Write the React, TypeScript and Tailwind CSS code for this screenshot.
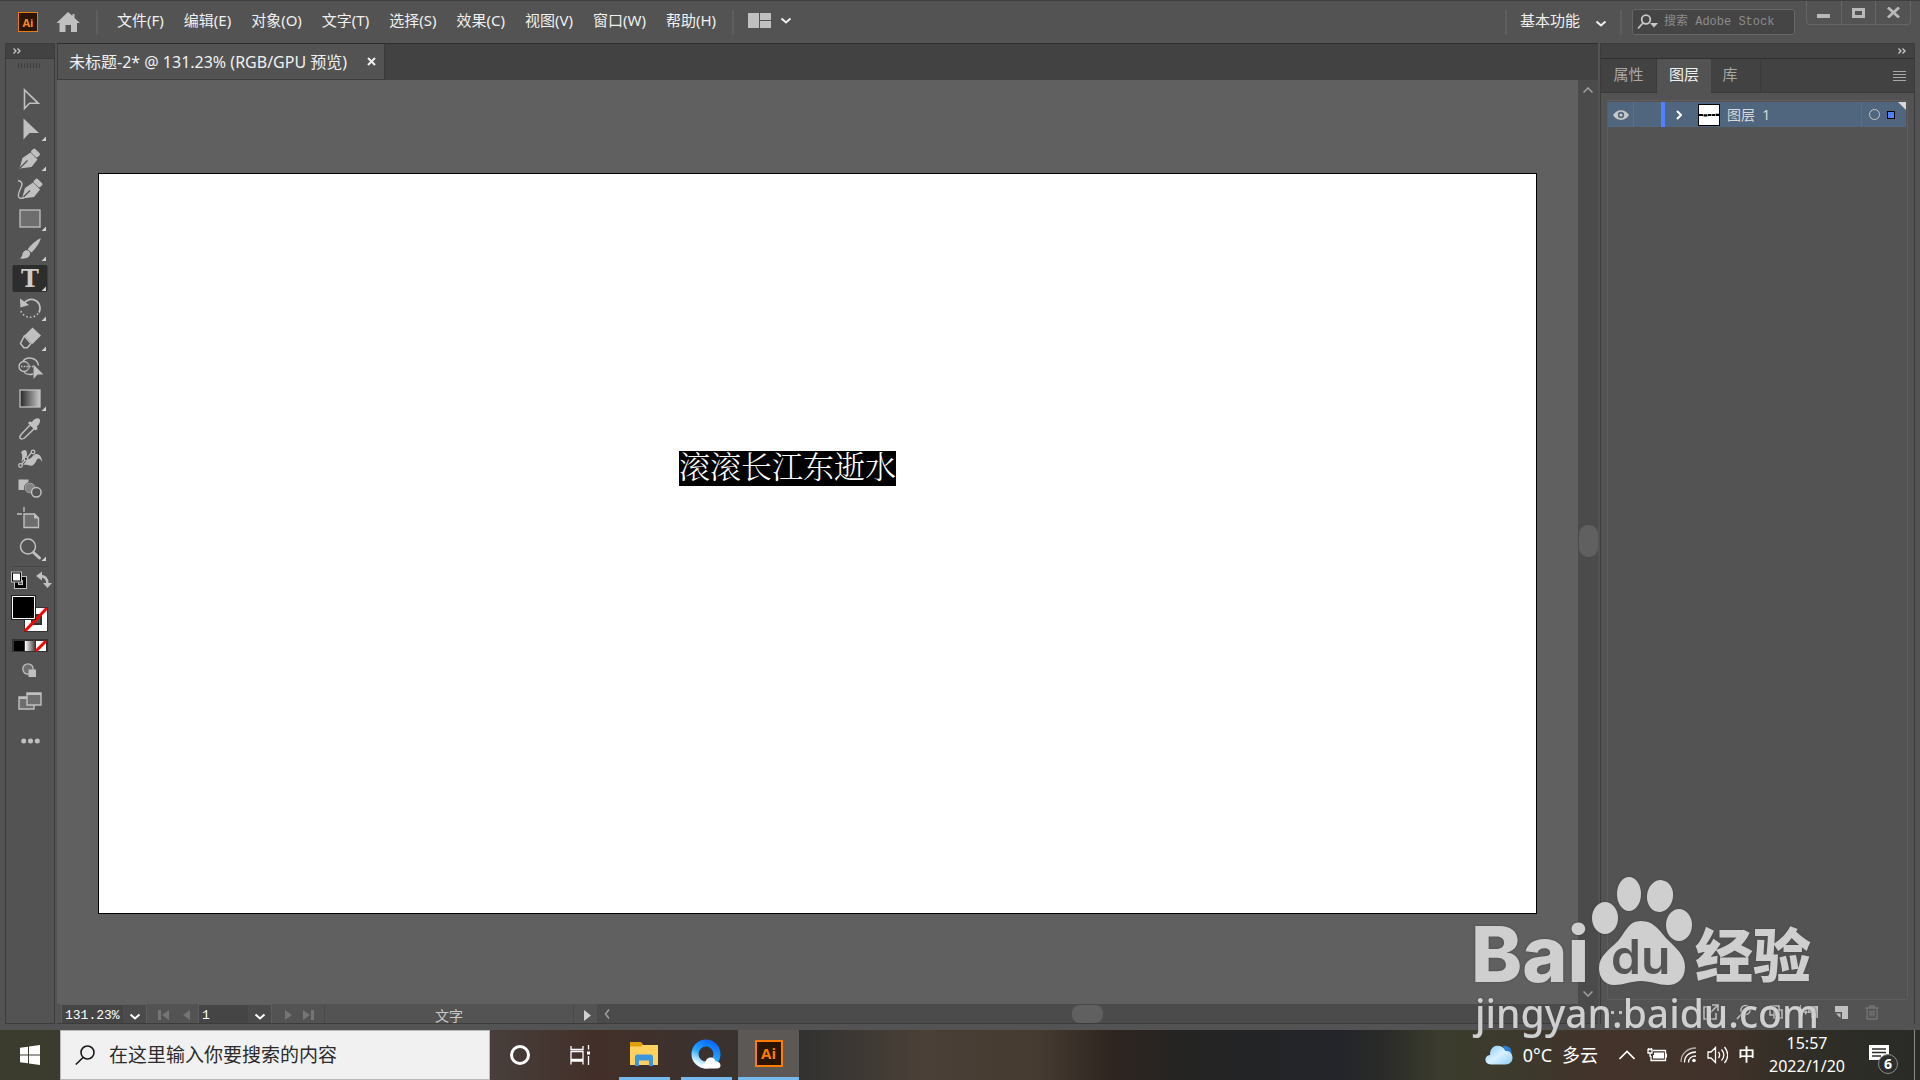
import React from 'react';
import { clsx } from 'clsx';

interface Tool {
  name: string;
  label: string;
  hasMore?: boolean;
  icon: React.ReactNode;
}

const LIGHT = '#c0c0c0';

const TOOLS: Tool[] = [
  {
    name: 'selection',
    label: '选择工具',
    icon: <path d="M12.5 6v18.5l5-5.2h8.8z" fill="none" stroke={LIGHT} strokeWidth="1.6" />,
  },
  {
    name: 'direct',
    label: '直接选择工具',
    hasMore: true,
    icon: <path d="M11.5 4.5v21l6-6.6h9.5z" fill={LIGHT} />,
  },
  {
    name: 'pen',
    label: '钢笔工具',
    hasMore: true,
    icon: (
      <>
        <path d="M7.5 24.5l3-10.5 8-5.5 7 7-6 7.5z" fill={LIGHT} />
        <path d="M8 24l7.5-7.5" stroke="#535353" strokeWidth="1.2" />
        <rect x="-2.7" y="-4.5" width="5.4" height="9" rx="1.4" transform="translate(23.5 9) rotate(-45)" fill={LIGHT} />
      </>
    ),
  },
  {
    name: 'curvature',
    label: '曲率工具',
    icon: (
      <>
        <path d="M10 24.5l3-10.5 8-5.5 7 7-6 7.5z" fill={LIGHT} />
        <path d="M10.5 24l7.5-7.5" stroke="#535353" strokeWidth="1.2" />
        <rect x="-2.7" y="-4.5" width="5.4" height="9" rx="1.4" transform="translate(26 9) rotate(-45)" fill={LIGHT} />
        <path d="M6 6.5c4 1 5 3 3 7s-4 8-2 10c1 1 3 1 5 0" fill="none" stroke={LIGHT} strokeWidth="1.4" />
      </>
    ),
  },
  {
    name: 'rectangle',
    label: '矩形工具',
    hasMore: true,
    icon: <rect x="8" y="6" width="20" height="17" fill="#6e6e6e" stroke={LIGHT} strokeWidth="1.3" />,
  },
  {
    name: 'brush',
    label: '画笔工具',
    hasMore: true,
    icon: (
      <>
        <path d="M28.7 4.3c-4 1.2-11 7.7-13 11l3.7 3.2c3.5-3 8.8-10.2 9.3-14.2z" fill={LIGHT} />
        <path d="M14.7 16.2c2 .2 3.4 1.5 3.4 3.3 0 4-5 6-10.5 4.8 2.5-.8 2.4-2.5 3-4.7.6-2 2-3.5 4.1-3.4z" fill={LIGHT} />
      </>
    ),
  },
  {
    name: 'type',
    label: '文字工具',
    hasMore: true,
    icon: (
      <text x="18" y="23" textAnchor="middle" fill="#cccccc" fontSize="24" fontWeight="700" className="font-['DejaVu_Serif',serif]">
        T
      </text>
    ),
  },
  {
    name: 'rotate',
    label: '旋转工具',
    hasMore: true,
    icon: (
      <>
        <path d="M12 9.5C17 2.500 27 5 28 13.500c.2 2-.3 3.500-1 5" fill="none" stroke={LIGHT} strokeWidth="1.8" />
        <path d="M8 4.500l.4 9 8.600-2.500z" fill={LIGHT} />
        <path d="M26 19.500a10 10 0 0 1-17.500-3.500" fill="none" stroke={LIGHT} strokeWidth="1.6" strokeDasharray="1.6 2.2" />
      </>
    ),
  },
  {
    name: 'eraser',
    label: '橡皮擦工具',
    hasMore: true,
    icon: (
      <>
        <path d="M20.5 3.5l8.500 8-8.500 8.500-8-8.500z" fill={LIGHT} />
        <path d="M12.3 12l6.700 7.500-3.700 4.200h-3.500l-3.300-4.200z" fill="none" stroke={LIGHT} strokeWidth="1.5" />
      </>
    ),
  },
  {
    name: 'shape-builder',
    label: '形状生成器工具',
    icon: (
      <>
        <circle cx="12" cy="12.5" r="5" fill="none" stroke={LIGHT} strokeWidth="1.4" />
        <path d="M11 7.5c3-5 14-5 15.500 4M12 18.500c3 2 6 2.500 9 1.500" fill="none" stroke={LIGHT} strokeWidth="1.5" />
        <path d="M14.500 8c3 2 3 7 0 9.500" fill="none" stroke="#909090" />
        <path d="M9 12.500h13" stroke={LIGHT} strokeWidth="1.4" strokeDasharray="1.5 1.2" />
        <path d="M21.500 10.500v14.500l4-4.500h6z" fill={LIGHT} />
      </>
    ),
  },
  {
    name: 'gradient',
    label: '渐变工具',
    hasMore: true,
    icon: (
      <>
        <defs>
          <linearGradient id="tool-gradient">
            <stop offset="0" stopColor="#262626" />
            <stop offset="1" stopColor="#c8c8c8" />
          </linearGradient>
        </defs>
        <rect x="8" y="6" width="20" height="17" fill="url(#tool-gradient)" stroke={LIGHT} strokeWidth="1.3" />
      </>
    ),
  },
  {
    name: 'eyedropper',
    label: '吸管工具',
    icon: (
      <>
        <path d="M18.500 10.500l4 4L12.500 24c-1.500 1-3.300 1.200-4.200.5s-.3-2.600.8-4z" fill="none" stroke={LIGHT} strokeWidth="1.5" />
        <path d="M17.500 7.500l2.500.5c2-3.500 5.500-4.500 7.200-3.200s.8 5.500-2.200 7.400l.5 2.800-2 1.500-7.500-7.500z" fill={LIGHT} />
      </>
    ),
  },
  {
    name: 'puppet-warp',
    label: '操控变形工具',
    icon: (
      <>
        <path d="M9 8.500c3-4 6-2.500 6 1s.5 6 3 5 3-4 6-4.500 6 2.500 6 8c-2-4-4-4.500-5.500-1.500s-3.500 6-6.500 5-4-1-8-.5c-1.500-5 2-8-1-12.500z" fill={LIGHT} />
        <path d="M8.500 21.500L20 8" stroke="#535353" strokeWidth="3" />
        <path d="M8.500 21.500L20 8" stroke={LIGHT} strokeWidth="1.2" />
        <circle cx="8.500" cy="21.500" r="1.800" fill="#535353" stroke={LIGHT} strokeWidth="1.3" />
        <circle cx="14" cy="15" r="1.800" fill="#535353" stroke={LIGHT} strokeWidth="1.3" />
        <circle cx="21" cy="8" r="1.800" fill="#535353" stroke={LIGHT} strokeWidth="1.3" />
      </>
    ),
  },
  {
    name: 'blend',
    label: '混合工具',
    icon: (
      <>
        <rect x="6.500" y="5.500" width="10" height="10.500" fill={LIGHT} />
        <circle cx="18" cy="14" r="5.500" fill="#828282" stroke="#535353" />
        <circle cx="18" cy="14" r="4.800" fill="#828282" stroke="#a0a0a0" />
        <circle cx="24.300" cy="18.300" r="4.800" fill="#535353" stroke={LIGHT} strokeWidth="1.5" />
      </>
    ),
  },
  {
    name: 'artboard',
    label: '画板工具',
    icon: (
      <>
        <path d="M12 10h10.500l4 4v9.500H12z" fill="#6e6e6e" stroke={LIGHT} strokeWidth="1.4" />
        <path d="M22 9.500v5h5z" fill={LIGHT} />
        <path d="M12 3v5M5 10h5" stroke={LIGHT} strokeWidth="1.4" />
      </>
    ),
  },
  {
    name: 'zoom',
    label: '缩放工具',
    hasMore: true,
    icon: (
      <>
        <circle cx="16" cy="12.500" r="7.500" fill="none" stroke={LIGHT} strokeWidth="1.5" />
        <path d="M21.500 18.500l6 5.500" stroke={LIGHT} strokeWidth="3" strokeLinecap="round" />
      </>
    ),
  },
];

const MENUS = ['文件(F)', '编辑(E)', '对象(O)', '文字(T)', '选择(S)', '效果(C)', '视图(V)', '窗口(W)', '帮助(H)'];

const Chevron: React.FC<{ className?: string }> = ({ className }) => (
  <svg viewBox="0 0 12 8" className={clsx('w-3 h-2 shrink-0', className)} fill="none" stroke="currentColor" strokeWidth="2">
    <path d="M1.500 1.500l4.500 4 4.500-4" />
  </svg>
);

const DoubleChevron: React.FC = () => (
  <svg viewBox="0 0 8 6" className="w-2 h-[6px]" fill="none" stroke="#c8c8c8" strokeWidth="1.3">
    <path d="M.5.5L3 3 .5 5.500M4.500.5L7 3 4.500 5.500" />
  </svg>
);

const Header: React.FC = () => (
  <header className="h-[43px] shrink-0 flex items-start border-t border-[#3f3f3f] text-[#f0f0f0]">
    <div className="h-[42px] flex flex-1 items-center">
      <div className="ml-[18px] w-5 h-5 bg-[#2b1400] border border-[#e87c10] flex items-center justify-center text-[11px] leading-none font-bold text-[#f68a1e] font-['Open_Sans',sans-serif]">
        Ai
      </div>
      <button aria-label="主页" className="ml-[18px]">
        <svg viewBox="0 0 24 20" className="w-6 h-5" fill="#c0c0c0">
          <path d="M12 0l4.500 4V2h2v4L24 11h-3v9h-6v-7H9.500v7h-6v-9H.5z" />
        </svg>
      </button>
      <div className="ml-[16px] w-[2px] h-[25px] bg-[#5e5e5e]" />
      <nav className="ml-[19px] pb-1 flex gap-5 text-[15px] leading-5">
        {MENUS.map((menu) => (
          <button key={menu} className="whitespace-nowrap">
            {menu}
          </button>
        ))}
      </nav>
      <div className="ml-[16px] w-[2px] h-[25px] bg-[#5e5e5e]" />
      <button aria-label="排列文档" className="ml-[14px] pb-[3px] flex items-center gap-[9px]">
        <svg viewBox="0 0 23 15" className="w-[23px] h-[15px]" fill="#c0c0c0">
          <path d="M0 0h11v15H0zM12 0h11v7H12zM12 8h11v7H12z" />
        </svg>
        <Chevron />
      </button>
    </div>
    <div className="h-[42px] flex items-center">
      <div className="w-[2px] h-[25px] bg-[#5e5e5e]" />
      <button className="ml-[13px] pb-1 flex items-center gap-[15px] text-[15px] leading-5">
        基本功能
        <Chevron className="mt-2" />
      </button>
      <div className="ml-[13px] w-[2px] h-[25px] bg-[#5e5e5e]" />
      <label className="ml-[10px] w-[163px] h-[26px] flex items-center bg-[#454545] border border-[#666666] rounded-[3px]">
        <svg viewBox="0 0 22 16" className="ml-1 w-[22px] h-4 shrink-0" fill="none" stroke="#c8c8c8" strokeWidth="1.8">
          <circle cx="9" cy="5.500" r="4.300" />
          <path d="M6 9l-5 5.500" />
          <path d="M13 9h8l-4 4.500z" fill="#c8c8c8" stroke="none" />
        </svg>
        <input
          type="text"
          aria-label="搜索 Adobe Stock"
          placeholder="搜索 Adobe Stock"
          className="ml-[5px] w-full min-w-0 bg-transparent outline-none text-[12px] leading-5 placeholder:text-[#8c8c8c] font-['Liberation_Mono','Noto_Sans_CJK_SC',monospace]"
        />
      </label>
    </div>
    <div className="ml-[11px] mr-[9px] h-6 w-[105px] flex border border-t-0 border-[#666666] rounded-b-[4px] divide-x divide-[#666666]">
      <button aria-label="最小化" className="flex-1 flex justify-center pt-[13px]">
        <span className="w-[13px] h-1 bg-[#b8b8b8]" />
      </button>
      <button aria-label="最大化" className="flex-1 flex justify-center pt-[7px]">
        <span className="w-[13px] h-[10px] border-[3px] border-[#b8b8b8]" />
      </button>
      <button aria-label="关闭" className="flex-1 flex justify-center pt-[6px]">
        <svg viewBox="0 0 13 11" className="w-[13px] h-[11px]" stroke="#b8b8b8" strokeWidth="2.8">
          <path d="M1 .5l11 10M12 .5l-11 10" />
        </svg>
      </button>
    </div>
  </header>
);

const Toolbox: React.FC = () => (
  <aside className="w-[50px] shrink-0 flex flex-col items-center border border-[#3c3c3c] bg-[#535353]">
    <div className="w-full h-[15px] shrink-0 bg-[#424242] border-b border-[#3c3c3c] flex items-center pl-[7px]">
      <DoubleChevron />
    </div>
    <svg viewBox="0 0 24 5" className="mt-[4px] mb-[16px] w-6 h-[5px] shrink-0" stroke="#3c3c3c">
      <path d="M.5 0v5M3.500 0v5M6.500 0v5M9.500 0v5M12.500 0v5M15.500 0v5M18.500 0v5M21.500 0v5" />
    </svg>
    {TOOLS.map((tool) => (
      <button key={tool.name} title={tool.label} className="w-9 h-[30px] shrink-0 flex items-center">
        <svg viewBox="0 0 36 30" className="w-9 h-[30px]">
          {tool.name === 'type' && <rect x="0.5" y="1" width="35" height="27" rx="2" fill="#2d2d2d" />}
          {tool.icon}
          {tool.hasMore && <path d="M34 22.500V27h-4.500z" fill="#d0d0d0" />}
        </svg>
      </button>
    ))}
    <div className="mt-[2px] w-[38px] h-px shrink-0 bg-[#474747]" />
    <svg viewBox="0 0 44 84" className="mt-[2px] w-[44px] h-[84px] shrink-0">
      {/* default colours and swap */}
      <g transform="translate(0 -1)">
        <path d="M8.500 10.500h8v8h-8z" fill="none" stroke={LIGHT} strokeWidth="5" />
        <path d="M8.500 10.500h8v8h-8z" fill="none" stroke="#000" strokeWidth="3" />
        <path d="M3 3.500h11v11H3z" fill={LIGHT} />
        <path d="M4 4.500h9v9H4z" fill="#000" />
        <path d="M5 5.500h7v7H5z" fill="#fff" />
        <path d="M32 8c5 0 7.500 2.500 7.500 8" fill="none" stroke={LIGHT} strokeWidth="2.5" />
        <path d="M28 8l6-4.500v9zM35 15h9l-4.500 5z" fill={LIGHT} />
      </g>
      {/* stroke and fill swatches */}
      <path d="M16 38h24v25H16z" fill="#333" />
      <path d="M17 39h22v23H17z" fill="#fff" />
      <path d="M24 46h9v9h-9z" fill="#535353" stroke="#333" strokeWidth="2" />
      <path d="M17 62L39 39" stroke="#f00" strokeWidth="3" />
      <path d="M3 26h25v25H3z" fill="#222" />
      <path d="M4.500 27.500h22v22h-22z" fill="#000" stroke="#fff" />
      {/* colour / gradient / none */}
      <defs>
        <linearGradient id="swatch-gradient">
          <stop offset="0" stopColor="#fff" />
          <stop offset="1" stopColor="#4a4040" />
        </linearGradient>
      </defs>
      <path d="M4 70h36v13H4z" fill="#333" />
      <path d="M6 72h10v10H6z" fill="#000" />
      <path d="M17 72h10v10H17z" fill="url(#swatch-gradient)" />
      <path d="M28 72h10v10H28z" fill="#fff" />
      <path d="M28 82l10-10" stroke="#f00" strokeWidth="3" />
    </svg>
    <button title="绘图模式" className="mt-[10px]">
      <svg viewBox="0 0 16 15" className="w-4 h-[15px]">
        <circle cx="6" cy="6" r="5.200" fill="#6e6e6e" stroke={LIGHT} strokeWidth="1.3" />
        <path d="M6.500 6.500H14V14H6.500z" fill={LIGHT} />
      </svg>
    </button>
    <button title="更改屏幕模式" className="mt-[14px]">
      <svg viewBox="0 0 24 18" className="w-6 h-[18px]" fill="#6e6e6e" stroke={LIGHT} strokeWidth="1.4">
        <path d="M1 5h15v12H1z" />
        <path d="M1 6h15" strokeWidth="2" />
        <path d="M9 1h14v12H9z" />
        <path d="M9 2h14" strokeWidth="2" />
      </svg>
    </button>
    <button title="编辑工具栏" className="mt-[28px]">
      <svg viewBox="0 0 19 6" className="w-[19px] h-[6px]" fill={LIGHT}>
        <circle cx="2.700" cy="3" r="2.500" />
        <circle cx="9.500" cy="3" r="2.500" />
        <circle cx="16.300" cy="3" r="2.500" />
      </svg>
    </button>
  </aside>
);

const StatusBar: React.FC = () => (
  <footer className="h-5 shrink-0 flex items-stretch border-b border-[#3c3c3c] bg-[#4b4b4b] text-white">
    <div className="w-[540px] shrink-0 flex items-stretch bg-[#535353]">
      <label className="ml-1 w-[86px] relative flex items-center bg-[#454545] border border-b-0 border-[#5e5e5e]">
        <select
          aria-label="缩放比例"
          className="w-full h-full pt-[3px] pl-[3px] appearance-none bg-transparent outline-none text-[13px] leading-4 font-['Liberation_Mono',monospace]"
        >
          <option>131.23%</option>
        </select>
        <span className="absolute right-0 inset-y-0 w-[23px] pt-[5px] flex items-center justify-center bg-[#4b4b4b] pointer-events-none">
          <Chevron />
        </span>
      </label>
      <button aria-label="首页" className="ml-[7px] w-5 pt-[3px] flex items-center justify-center">
        <svg viewBox="0 0 12 10" className="w-3 h-[10px]" fill="#757575">
          <path d="M0 0h3v10H0zM11 0v10L4 5z" />
        </svg>
      </button>
      <button aria-label="上一页" className="ml-1 w-4 pt-[3px] flex items-center justify-center">
        <svg viewBox="0 0 7 10" className="w-[7px] h-[10px]" fill="#757575">
          <path d="M7 0v10L0 5z" />
        </svg>
      </button>
      <label className="ml-1 w-[74px] relative flex items-center bg-[#454545] border border-b-0 border-[#5e5e5e]">
        <select
          aria-label="画板"
          className="w-full h-full pt-[3px] pl-[3px] appearance-none bg-transparent outline-none text-[13px] leading-4 font-['Liberation_Mono',monospace]"
        >
          <option>1</option>
        </select>
        <span className="absolute right-0 inset-y-0 w-[23px] pt-[5px] flex items-center justify-center bg-[#4b4b4b] pointer-events-none">
          <Chevron />
        </span>
      </label>
      <button aria-label="下一页" className="ml-2 w-4 pt-[3px] flex items-center justify-center">
        <svg viewBox="0 0 7 10" className="w-[7px] h-[10px]" fill="#757575">
          <path d="M0 0v10l7-5z" />
        </svg>
      </button>
      <button aria-label="末页" className="ml-1 w-4 pt-[3px] flex items-center justify-center">
        <svg viewBox="0 0 12 10" className="w-3 h-[10px]" fill="#757575">
          <path d="M1 0v10l7-5zM9 0h3v10H9z" />
        </svg>
      </button>
      <div className="ml-2 flex-1 border-x border-[#4a4a4a] flex items-center justify-center text-[14px] leading-5 text-[#c8c8c8] pt-[5px]">
        文字
      </div>
      <button aria-label="状态栏选项" className="w-[23px] pt-[3px] pl-[3px] flex items-center justify-center">
        <svg viewBox="0 0 7 11" className="w-[7px] h-[11px]" fill="#d0d0d0">
          <path d="M0 0v11l7-5.500z" />
        </svg>
      </button>
    </div>
    <div className="flex-1 flex items-center pl-[7px] pr-[20px]">
      <svg viewBox="0 0 6 10" className="w-[6px] h-[10px]" fill="none" stroke="#a0a0a0" strokeWidth="1.5">
        <path d="M5 .5L1.500 5 5 9.500" />
      </svg>
      <div className="flex-1 grid grid-cols-[459fr_31px_471fr]">
        <span className="col-start-2 h-[18px] rounded-[8px] bg-[#606060]" />
      </div>
    </div>
  </footer>
);

const DocumentArea: React.FC = () => (
  <main className="flex-1 min-w-0 flex flex-col">
    <div className="h-[37px] shrink-0 flex bg-[#424242] border-t border-[#2f2f2f]">
      <div className="w-[328px] flex items-center border-x border-b border-[#3c3c3c] bg-[#535353] text-[#f0f0f0] text-[16px] leading-5">
        <span className="ml-[11px] whitespace-nowrap">未标题-2* @ 131.23% (RGB/GPU 预览)</span>
        <button aria-label="关闭文档" className="ml-auto mr-2">
          <svg viewBox="0 0 9 9" className="w-[9px] h-[9px]" stroke="#f0f0f0" strokeWidth="2">
            <path d="M1 1l7 7M8 1l-7 7" />
          </svg>
        </button>
      </div>
    </div>
    <div className="flex-1 flex">
      <div className="flex-1 flex bg-[#606060] px-[41px] pt-[93px] pb-[90px]">
        <div className="relative flex-1 border border-black bg-white">
          <span className="absolute left-[580px] top-[277px] h-[35px] bg-black text-white text-[31px] leading-[28px] whitespace-nowrap font-['Noto_Serif_CJK_SC','Noto_Sans_CJK_SC',serif] font-light">
            滚滚长江东逝水
          </span>
        </div>
      </div>
      <div className="w-5 flex flex-col items-center bg-[#4b4b4b] pt-[7px] pb-[7px] text-[#a0a0a0]">
        <svg viewBox="0 0 10 6" className="w-[10px] h-[6px]" fill="none" stroke="currentColor" strokeWidth="1.5">
          <path d="M.5 5.500L5 1l4.500 4.500" />
        </svg>
        <div className="flex-1 w-full grid grid-rows-[432fr_32px_433fr]">
          <span className="row-start-2 ml-px rounded-[9px] bg-[#606060]" />
        </div>
        <svg viewBox="0 0 10 6" className="w-[10px] h-[6px]" fill="none" stroke="currentColor" strokeWidth="1.5">
          <path d="M.5.5L5 5 9.500.5" />
        </svg>
      </div>
    </div>
    <StatusBar />
  </main>
);

const LayerRow: React.FC = () => (
  <div className="relative h-[25px] flex items-stretch bg-[#50667e] text-[#d8d8d8]">
    <button aria-label="切换可视性" className="w-[26px] flex items-center justify-center border-r border-[#5a6e84]">
      <svg viewBox="0 0 16 10" className="w-4 h-[10px]">
        <path d="M0 5c4-6.500 12-6.500 16 0-4 6.500-12 6.500-16 0z" fill="#c8c8c8" />
        <circle cx="8" cy="5" r="3.200" fill="#50667e" />
        <circle cx="8" cy="5" r="1.600" fill="#c8c8c8" />
      </svg>
    </button>
    <button aria-label="切换锁定" className="w-[27px]" />
    <span className="w-1 bg-[#4f80ff]" />
    <button aria-label="展开图层" className="w-[28px] flex items-center justify-center">
      <svg viewBox="0 0 6 10" className="w-[6px] h-[10px]" fill="none" stroke="#fff" strokeWidth="2">
        <path d="M1 1l4 4-4 4" />
      </svg>
    </button>
    <span className="ml-[5px] mt-[2px] mb-px w-[22px] flex items-center bg-white border border-black">
      <svg viewBox="0 0 20 4" className="w-5 h-1" stroke="#000" strokeWidth="2.2">
        <path d="M0 2h4M4.500 2.400h4M9 2h3.500M13 2h3M16.500 1.800h3.500" />
      </svg>
    </span>
    <span className="ml-[7px] flex-1 flex items-center text-[14px] leading-5">图层&nbsp; 1</span>
    <span className="w-[45px] flex items-center justify-end gap-[7px] pr-[11px] border-l border-[#5a6e84]">
      <span className="w-[11px] h-[11px] rounded-full border-[1px] border-[#c8c8c8]" />
      <span className="w-2 h-2 bg-[#4f80ff] border border-black" />
    </span>
    <svg viewBox="0 0 8 8" className="absolute right-0 top-0 w-2 h-2" fill="#d8d8d8">
      <path d="M0 0h8v8z" />
    </svg>
  </div>
);

const LayersDock: React.FC = () => (
  <aside className="w-[315px] shrink-0 flex flex-col border-x border-t border-[#3c3c3c] bg-[#535353] text-[15px] leading-5">
    <div className="h-[15px] shrink-0 flex items-center justify-end pr-2 bg-[#424242] border-b border-[#2f2f2f]">
      <DoubleChevron />
    </div>
    <div role="tablist" className="h-[34px] shrink-0 flex bg-[#424242] text-[#a8a8a8]">
      <button role="tab" className="w-[56px] pb-[3px] border-r border-b border-[#3a3a3a]">
        属性
      </button>
      <button role="tab" aria-selected="true" className="w-[54px] pb-1 bg-[#535353] text-[#f0f0f0]">
        图层
      </button>
      <button role="tab" className="w-[50px] pr-[11px] pb-[3px] border-r border-b border-[#3a3a3a]">
        库
      </button>
      <div className="flex-1 flex items-center justify-end pr-[8px] border-b border-[#3a3a3a]">
        <button aria-label="面板菜单">
          <svg viewBox="0 0 13 10" className="w-[13px] h-[10px]" stroke="#a8a8a8">
            <path d="M0 .5h13M0 3.500h13M0 6.500h13M0 9.500h13" />
          </svg>
        </button>
      </div>
    </div>
    <div className="mt-[7px] mx-[6px] flex-1 p-px pl-0 border border-[#5e5e5e] rounded-[2px]">
      <LayerRow />
    </div>
    <div className="h-[24px] shrink-0 flex items-center pl-[10px] pr-[35px] text-[#c0c0c0]">
      <svg viewBox="0 0 24 3" className="w-6 h-[3px]" fill="currentColor">
        <path d="M0 0h3v3H0zM8 0h3v3H8zM16 0h3v3h-3z" />
      </svg>
      <div className="ml-auto flex items-center gap-[17px]">
        <button aria-label="收集以导出">
          <svg viewBox="0 0 16 16" className="w-4 h-4" fill="none" stroke="currentColor" strokeWidth="1.5">
            <path d="M7 3H1v12h12V9M9 1h6v6M15 1L7 9" />
          </svg>
        </button>
        <button aria-label="定位对象">
          <svg viewBox="0 0 16 16" className="w-4 h-4" fill="none" stroke="currentColor" strokeWidth="1.6">
            <circle cx="9.500" cy="6" r="4.500" />
            <path d="M6 9.500L1 15" />
          </svg>
        </button>
        <button aria-label="建立剪切蒙版">
          <svg viewBox="0 0 14 14" className="w-[14px] h-[14px]" fill="none" stroke="currentColor" strokeWidth="1.5">
            <path d="M1 1h9v9H1zM5 5h8v8H5z" />
          </svg>
        </button>
        <button aria-label="创建新子图层">
          <svg viewBox="0 0 18 14" className="w-[18px] h-[14px]" fill="currentColor">
            <path d="M0 0h1v6h4V4l3 3-3 3V8H0zM8 1h10v12h-7V8H8z" />
          </svg>
        </button>
        <button aria-label="创建新图层">
          <svg viewBox="0 0 13 13" className="w-[13px] h-[13px]" fill="currentColor">
            <path d="M0 0h13v13H7V6H0zM1 7.500h4.500V12z" />
          </svg>
        </button>
        <button aria-label="删除所选图层" className="text-[#757575]">
          <svg viewBox="0 0 14 15" className="w-[14px] h-[15px]" fill="none" stroke="currentColor" strokeWidth="1.3">
            <path d="M.5 3h13M5 3V1h4v2M2 3v11h10V3M5 5.500v6M7 5.500v6M9 5.500v6" />
          </svg>
        </button>
      </div>
    </div>
  </aside>
);

const Taskbar: React.FC = () => (
  <footer className="h-[50px] shrink-0 flex items-stretch text-white bg-[linear-gradient(90deg,#3b3c2e_0%,#3b3c2e_4%,#48403d_25%,#432f29_31%,#3a322f_38%,#333231_42%,#4a4037_48%,#453b31_54%,#2e2520_58%,#242423_62%,#23252a_70%,#2a2a28_72%,#3b3c2d_75%,#3c3a2c_79%,#43332b_83%,#40322a_90%,#2f2e26_94%,#2a2a27_100%)]">
    <button aria-label="开始" className="w-[60px] flex items-center justify-center">
      <svg viewBox="0 0 20 20" className="w-5 h-5" fill="#fff">
        <path d="M0 2.800l8-1.100v7.800H0zM9 1.500L20 0v9.500H9zM0 10.500h8v7.800l-8-1.100zM9 10.500h11V20L9 18.500z" />
      </svg>
    </button>
    <label className="w-[430px] flex items-center bg-[#f1f1f1] border border-[#b8b8b8]">
      <svg viewBox="0 0 20 20" className="ml-[14px] w-5 h-5 shrink-0" fill="none" stroke="#1a1a1a" strokeWidth="1.6">
        <circle cx="12.500" cy="7.500" r="6.500" />
        <path d="M8 12.500L.8 19.500" />
      </svg>
      <input
        type="text"
        aria-label="搜索"
        placeholder="在这里输入你要搜索的内容"
        className="ml-[14px] w-full min-w-0 bg-transparent outline-none text-[19px] leading-7 text-[#2b2b2b] placeholder:text-[#2b2b2b]"
      />
    </label>
    <button aria-label="Cortana" className="w-[60px] flex items-center justify-center">
      <span className="w-5 h-5 rounded-full border-[3px] border-white" />
    </button>
    <button aria-label="任务视图" className="w-[60px] flex items-center justify-center">
      <svg viewBox="0 0 21 20" className="w-[21px] h-5" fill="none" stroke="#fff" strokeWidth="1.3">
        <path d="M1 1v3.500h12V1M1 6.500h12v8H1zM1 19.500V16h12v3.500M18.500 0v4.500M18.500 11v9" />
        <path d="M17 6.500h3v3h-3z" fill="#fff" stroke="none" />
      </svg>
    </button>
    <button aria-label="文件资源管理器" className="ml-[9px] w-[51px] pr-[2px] flex items-center justify-center border-b-[3px] border-[#76b9ed]">
      <svg viewBox="0 0 28 24" className="mt-[1px] w-7 h-6">
        <path d="M0 1h11l2 2h15v20H0z" fill="#ffd25f" />
        <path d="M0 0h11l2 2.500-2 2H0z" fill="#e19f07" />
        <path d="M5 24V15q0-2.500 2.500-2.500h13Q23 12.500 23 15v9h-4v-5.500H9V24z" fill="#3a96dd" />
      </svg>
    </button>
    <button aria-label="QQ 浏览器" className="ml-[11px] w-[51px] pr-[2px] flex items-center justify-center border-b-[3px] border-[#76b9ed]">
      <svg viewBox="0 0 30 30" className="w-[30px] h-[30px]">
        <defs>
          <linearGradient id="qq-ring" x1="0.8" y1="0" x2="0.3" y2="1">
            <stop offset="0" stopColor="#0a6dff" />
            <stop offset="0.55" stopColor="#22a8ff" />
            <stop offset="1" stopColor="#e8f8ff" />
          </linearGradient>
        </defs>
        <circle cx="15" cy="15" r="11" fill="none" stroke="url(#qq-ring)" strokeWidth="7" />
        <path d="M14 29.500c-3.500 0-4-5 0-5.500 1-4 3-5.500 6-5.500s4 2 4.500 4c3.500-.5 5 2 5 4s-1.500 3-3.500 3z" fill="#fff" />
      </svg>
    </button>
    <button aria-label="Adobe Illustrator" className="ml-[6px] w-[61px] flex items-center justify-center bg-[#5b5856] border-b-[3px] border-[#76b9ed]">
      <span className="w-7 h-[27px] flex items-center justify-center bg-[#2b1400] border-2 border-[#ff7c00] text-[15px] leading-none font-bold text-[#ff7c00] font-['Open_Sans',sans-serif]">
        Ai
      </span>
    </button>
    <div className="ml-auto flex items-center">
      <button className="flex items-center text-[18px] leading-6 whitespace-nowrap">
        <svg viewBox="0 0 28 20" className="mr-[10px] w-7 h-5">
          <defs>
            <linearGradient id="cloud-fill" x1="0" y1="0" x2="1" y2="1">
              <stop offset="0" stopColor="#7cc4f5" />
              <stop offset="0.5" stopColor="#d9f1ff" />
              <stop offset="1" stopColor="#8fcdf5" />
            </linearGradient>
          </defs>
          <path d="M18 1c5-1 10 3 8 9l-6-3z" fill="#2c7fd0" />
          <path d="M6 19.500c-7 0-7.500-9-1-9.500C5 3 9 .5 13 .8c4 .2 6 2.200 7 5 5 0 7.500 3 7.500 7s-3 6.700-7 6.700z" fill="url(#cloud-fill)" />
        </svg>
        <span>0°C</span>
        <span className="ml-[10px]">多云</span>
      </button>
      <button aria-label="显示隐藏的图标" className="ml-[21px]">
        <svg viewBox="0 0 16 10" className="w-4 h-[10px]" fill="none" stroke="#fff" strokeWidth="1.6">
          <path d="M.5 9L8 1.500 15.500 9" />
        </svg>
      </button>
      <svg viewBox="0 0 20 14" className="ml-3 w-5 h-[14px]" fill="none" stroke="#fff" strokeWidth="1.3">
        <path d="M6 2.500h12.500v10H4V8M1 1.500h4v3.500H1zM1.800 0v1.500M4.200 0v1.500M3 5v3h1M19.500 5.500v4" />
        <path d="M7 4.500h10v6H6V7h1z" fill="#fff" stroke="none" />
      </svg>
      <svg viewBox="0 0 17 16" className="ml-[13px] w-[17px] h-4" fill="none" stroke="#fff" strokeWidth="1.3">
        <path d="M1 15C1 7 7 1 16 1" opacity="0.6" />
        <path d="M4.500 15.500C4.500 9 9 5 16 5M8.500 15.500c0-4 3-6.500 7.500-6.500" />
        <circle cx="14" cy="13.500" r="1.800" fill="#fff" stroke="none" />
      </svg>
      <svg viewBox="0 0 21 18" className="ml-[10px] w-[21px] h-[18px]" fill="none" stroke="#fff" strokeWidth="1.3">
        <path d="M1 6h3l4.500-4.500v15L4 12H1zM11.500 6c1.500 2 1.500 4 0 6M14.500 3.500c3 3.500 3 7.500 0 11M17.500 1c4 5 4 11 0 16" />
      </svg>
      <span className="ml-[10px] text-[17px] leading-6 font-medium">中</span>
      <div className="ml-[14px] flex flex-col items-center text-[16px] leading-[23px] whitespace-nowrap">
        <span>15:57</span>
        <span>2022/1/20</span>
      </div>
      <button aria-label="通知" className="relative ml-[24px] mb-[2px] w-5 h-[18px]">
        <svg viewBox="0 0 20 18" className="w-5 h-[18px]">
          <path d="M0 0h20v15h-6v3l-3-3H0z" fill="#fff" />
          <path d="M3 4h14M3 7.500h14M3 11h9" stroke="#2d2d28" strokeWidth="1.4" />
        </svg>
        <span className="absolute left-[9px] top-[9px] w-5 h-5 rounded-full bg-[#2d2d2d] border border-[#8c8c8c] text-[14px] leading-[18px] font-bold text-center">
          6
        </span>
      </button>
      <div className="ml-[25px] mr-[5px] w-px h-[50px] bg-[#8a8a86]" />
    </div>
  </footer>
);

const Watermark: React.FC = () => (
  <svg
    viewBox="0 0 350 165"
    className="absolute right-[100px] bottom-[40px] w-[350px] h-[165px] pointer-events-none drop-shadow-[0_0_1px_#444444]"
    fill="#cfcfcf"
  >
    <text x="1" y="107" fontSize="77" fontWeight="800" className="font-['Inter',sans-serif]">
      Bai
    </text>
    <ellipse cx="135" cy="43" rx="13" ry="16" />
    <ellipse cx="159" cy="19" rx="12" ry="17" />
    <ellipse cx="190" cy="21" rx="13" ry="16" transform="rotate(8 190 21)" />
    <ellipse cx="209" cy="50" rx="13" ry="16" />
    <path d="M171 46c14 0 19 11 27 19 8 8 17 15 17 27 0 12-8 18-17 18-10 0-17-4-27-4s-17 4-27 4c-9 0-15-7-15-17 0-12 10-18 19-27 8-9 10-20 23-20z" />
    <text x="141" y="99" fontSize="48" fontWeight="600" fill="#555555" className="font-['Inter',sans-serif]">
      du
    </text>
    <text x="225" y="102" fontSize="58" fontWeight="900" className="font-['Noto_Sans_CJK_SC',sans-serif]">
      经验
    </text>
    <text x="5" y="153" fontSize="39" fontWeight="500" className="font-['Noto_Sans',sans-serif]">
      jingyan.baidu.com
    </text>
  </svg>
);

const App: React.FC = () => (
  <div className="relative h-screen overflow-hidden flex flex-col bg-[#535353] font-['Noto_Sans','Noto_Sans_CJK_SC',sans-serif]">
    <Header />
    <div className="flex-1 min-h-0 flex gap-[2px] px-[5px] pb-[6px]">
      <Toolbox />
      <DocumentArea />
      <LayersDock />
    </div>
    <Taskbar />
    <Watermark />
  </div>
);

export default App;
